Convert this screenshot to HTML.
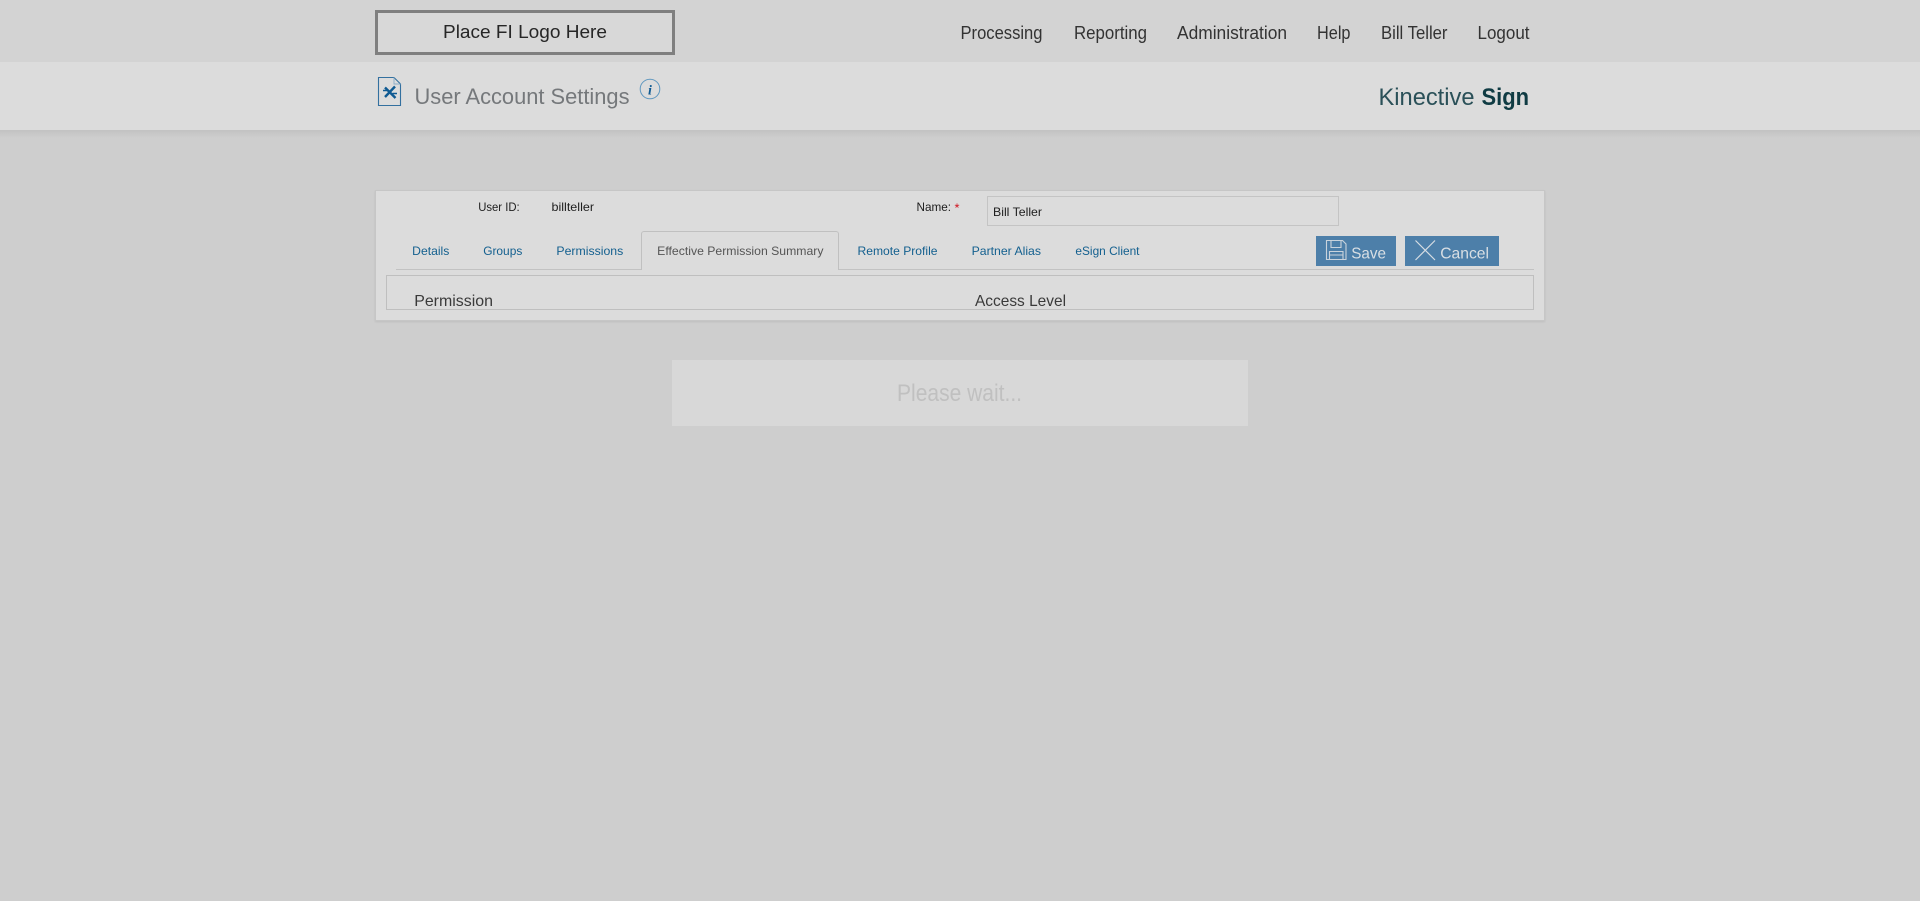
<!DOCTYPE html>
<html lang="en">
<head>
<meta charset="utf-8">
<title>User Account Settings</title>
<style>
html,body{margin:0;padding:0;width:1920px;height:901px;overflow:hidden;background:#cecece}
div{position:absolute;box-sizing:border-box}
svg{position:absolute;left:0;top:0}
text{font-family:"Liberation Sans",sans-serif}
</style>
</head>
<body>
<div style="left:0;top:0;width:1920px;height:62px;background:#d3d3d3"></div>
<div style="left:0;top:130px;width:1920px;height:8px;background:linear-gradient(#c2c2c2,#cecece)"></div>
<div style="left:0;top:62px;width:1920px;height:68px;background:#dcdcdc"></div>
<div style="left:375px;top:10px;width:300px;height:45px;border:3px solid #7f7f7f;background:#d8d8d8"></div>

<div style="left:375px;top:190px;width:1170px;height:131px;background:#dcdcdc;border:1px solid #c6c6c6;box-shadow:0 1px 2px rgba(0,0,0,.08)"></div>
<div style="left:987px;top:196px;width:352px;height:30px;border:1px solid #c4c4c4;background:#dcdcdc"></div>
<div style="left:396px;top:269px;width:1138px;height:1px;background:#c2c2c2"></div>
<div style="left:641px;top:231px;width:198px;height:39px;background:#dcdcdc;border:1px solid #c0c0c0;border-bottom:0;border-radius:3px 3px 0 0"></div>
<div style="left:386px;top:275px;width:1148px;height:35px;border:1px solid #bfbfbf"></div>
<div style="left:1316px;top:236px;width:80px;height:30px;background:#4d7fa9"></div>
<div style="left:1405px;top:236px;width:94px;height:30px;background:#4d7fa9"></div>
<div style="left:672px;top:360px;width:576px;height:66px;background:#d8d8d8"></div>

<svg width="1920" height="901" viewBox="0 0 1920 901" xmlns="http://www.w3.org/2000/svg">
  <!-- logo -->
  <text x="443" y="38" font-size="18.500" fill="#262626" textLength="164" lengthAdjust="spacingAndGlyphs">Place FI Logo Here</text>

  <!-- nav -->
  <g font-size="18" fill="#333">
    <text x="960.500" y="39" textLength="82" lengthAdjust="spacingAndGlyphs">Processing</text>
    <text x="1074" y="39" textLength="73" lengthAdjust="spacingAndGlyphs">Reporting</text>
    <text x="1177" y="39" textLength="110" lengthAdjust="spacingAndGlyphs">Administration</text>
    <text x="1317" y="39" textLength="33.500" lengthAdjust="spacingAndGlyphs">Help</text>
    <text x="1381" y="39" textLength="66.500" lengthAdjust="spacingAndGlyphs">Bill Teller</text>
    <text x="1477.500" y="39" textLength="52" lengthAdjust="spacingAndGlyphs">Logout</text>
  </g>

  <!-- page icon -->
  <path d="M378.500 77.500H394L400.500 84V105.500H378.500Z" fill="none" stroke="#33709f" stroke-width="1.100"/>
  <path d="M394 77.500V84H400.500" fill="none" stroke="#8aadc8" stroke-width=".9"/>
  <path d="M385 87.500L395.500 98M395 86.500L385 97" stroke="#0f5a92" stroke-width="2.400" fill="none"/>
  <path d="M383 90.500H388M392.500 93.500H397" stroke="#0f5a92" stroke-width="1.600" fill="none"/>

  <text x="414.500" y="104" font-size="22" fill="#75787b" textLength="215" lengthAdjust="spacingAndGlyphs">User Account Settings</text>

  <!-- info icon -->
  <circle cx="650" cy="89" r="9.800" fill="none" stroke="#5f97bf" stroke-width="1"/>
  <text x="650" y="94.500" font-size="14" font-weight="bold" font-style="italic" fill="#0f5a92" text-anchor="middle" style="font-family:'Liberation Serif',serif">i</text>

  <!-- brand -->
  <text x="1378.500" y="105" font-size="24" fill="#2a5058" textLength="96" lengthAdjust="spacingAndGlyphs">Kinective</text>
  <text x="1481.500" y="105" font-size="24" font-weight="bold" fill="#0f3b43" textLength="47.500" lengthAdjust="spacingAndGlyphs">Sign</text>

  <!-- form -->
  <g font-size="12" fill="#1e1e1e">
    <text x="478.200" y="211" textLength="41.500" lengthAdjust="spacingAndGlyphs">User ID:</text>
    <text x="551.500" y="211" textLength="42.500" lengthAdjust="spacingAndGlyphs">billteller</text>
    <text x="916.500" y="211" textLength="34.500" lengthAdjust="spacingAndGlyphs">Name:</text>
    <text x="993" y="216" textLength="49" lengthAdjust="spacingAndGlyphs">Bill Teller</text>
  </g>
  <text x="954.500" y="212" font-size="12" fill="#d0101c" textLength="5" lengthAdjust="spacingAndGlyphs">*</text>

  <!-- tabs -->
  <g font-size="12" fill="#14608f">
    <text x="412.200" y="255" textLength="37.100" lengthAdjust="spacingAndGlyphs">Details</text>
    <text x="483.200" y="255" textLength="39.100" lengthAdjust="spacingAndGlyphs">Groups</text>
    <text x="556.400" y="255" textLength="66.900" lengthAdjust="spacingAndGlyphs">Permissions</text>
    <text x="857.500" y="255" textLength="80" lengthAdjust="spacingAndGlyphs">Remote Profile</text>
    <text x="971.600" y="255" textLength="69.400" lengthAdjust="spacingAndGlyphs">Partner Alias</text>
    <text x="1075.400" y="255" textLength="64.100" lengthAdjust="spacingAndGlyphs">eSign Client</text>
  </g>
  <text x="657.200" y="255" font-size="12" fill="#555" textLength="166.300" lengthAdjust="spacingAndGlyphs">Effective Permission Summary</text>

  <!-- buttons -->
  <g fill="none" stroke="#c9d3dc" stroke-width="1.100">
    <path d="M1326.500 240.500H1342.500L1346 244V259.500H1326.500Z"/>
    <path d="M1331 240.500V247.500H1341V240.500"/>
    <path d="M1329.500 259.500V251.500H1343V259.500M1329.500 255H1343"/>
  </g>
  <path d="M1415.500 240.500L1435 260M1435 240.500L1415.500 260" stroke="#d6dde3" stroke-width="1.200" fill="none"/>
  <g font-size="16" fill="#d9dfe4">
    <text x="1351.200" y="258.500" textLength="34.800" lengthAdjust="spacingAndGlyphs">Save</text>
    <text x="1440.200" y="258.500" textLength="48.800" lengthAdjust="spacingAndGlyphs">Cancel</text>
  </g>

  <!-- table header -->
  <g font-size="16" fill="#3a3a3a">
    <text x="414.200" y="306" textLength="78.800" lengthAdjust="spacingAndGlyphs">Permission</text>
    <text x="975" y="306" textLength="91" lengthAdjust="spacingAndGlyphs">Access Level</text>
  </g>

  <!-- please wait -->
  <text x="897" y="401" font-size="24" fill="#c0c0c0" textLength="125" lengthAdjust="spacingAndGlyphs">Please wait...</text>
</svg>
</body>
</html>
